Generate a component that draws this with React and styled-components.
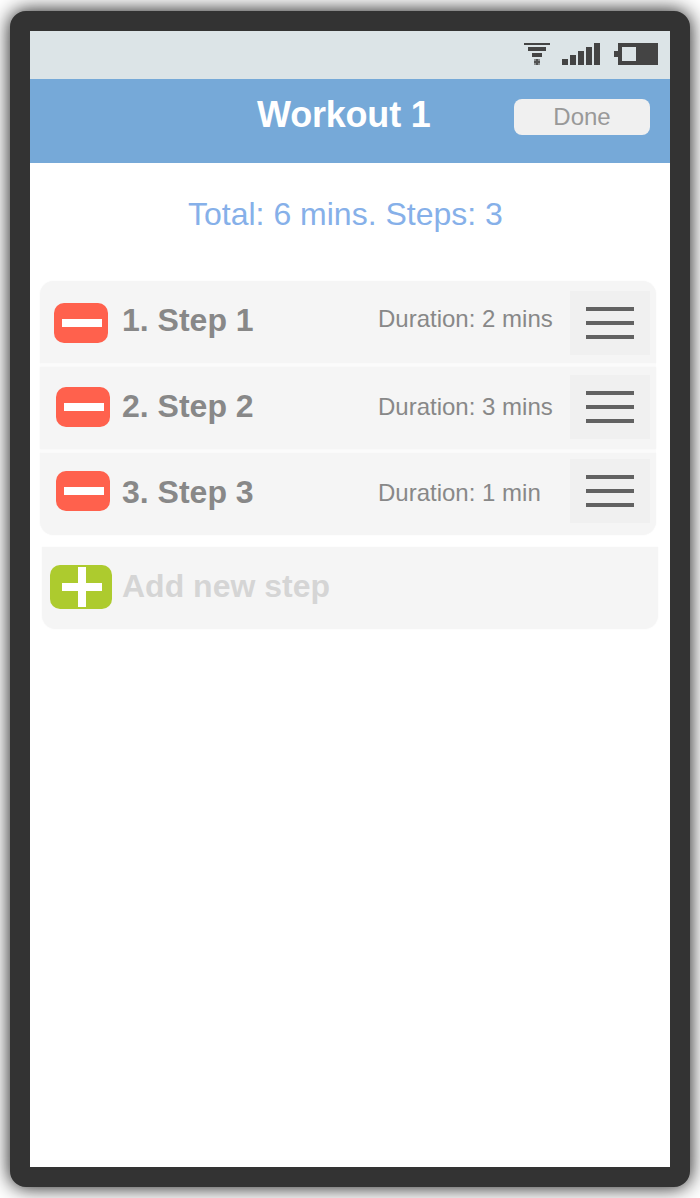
import React from "react";
import styled, { createGlobalStyle } from "styled-components";

const GlobalStyle = createGlobalStyle`
  * { box-sizing: border-box; }
  body {
    margin: 0;
    background: #fff;
    font-family: "Liberation Sans", Arial, sans-serif;
    overflow: hidden;
  }
  button { border: 0; padding: 0; margin: 0; font: inherit; }
`;

const Page = styled.div`
  width: 700px;
  height: 1198px;
  padding: 11px 10px;
  overflow: hidden;
`;

const Phone = styled.main`
  width: 680px;
  height: 1176px;
  border: 20px solid #333;
  border-radius: 16px;
  background: #fff;
  box-shadow: 0 0 20px rgba(0, 0, 0, 0.95);
  display: flex;
  flex-direction: column;
`;

const StatusBar = styled.div`
  height: 48px;
  padding: 12px 12px 0 0;
  background: #dce4e7;
  display: flex;
  justify-content: flex-end;
  align-items: flex-start;
  svg { display: block; fill: #444; }
`;

const WifiIcon = styled.svg`margin-right: 12px;`;
const SignalIcon = styled.svg`margin-right: 14px;`;

const Header = styled.header`
  height: 84px;
  background: #76a9d8;
  display: grid;
  grid-template-columns: 227px 257px 136px;
  align-items: start;
`;

const Title = styled.h1`
  margin: 15px 0 0;
  font-size: 36px;
  line-height: 41px;
  font-weight: bold;
  letter-spacing: -0.2px;
  color: #fff;
  white-space: nowrap;
`;

const DoneButton = styled.button`
  margin-top: 20px;
  height: 36px;
  border-radius: 8px;
  background: #f0f0f0;
  color: #999;
  font-size: 24px;
  line-height: 36px;
`;

const Summary = styled.p`
  margin: 33px 0 0 158px;
  font-size: 32px;
  line-height: 36px;
  color: #86b0e9;
  white-space: nowrap;
`;

const StepList = styled.ul`
  list-style: none;
  margin: 49px 14px 0 10px;
  padding: 0;
  display: flex;
  flex-direction: column;
  gap: 4px;
  background: #fbfbfb;
  border-radius: 14px;
`;

const Row = styled.li`
  height: 82px;
  background: #f5f5f5;
  box-shadow: 0 0 2px #f5f5f5;
  display: grid;
  grid-template-columns: 82px 256px 192px 80px;
  align-items: start;
  &:first-child { border-radius: 14px 14px 0 0; }
  &:last-child { border-radius: 0 0 14px 14px; }
`;

const AddRow = styled.div`
  height: 82px;
  margin: 12px 12px 0;
  background: #f5f5f5;
  box-shadow: 0 0 2px #f5f5f5;
  border-radius: 0 0 14px 14px;
  display: grid;
  grid-template-columns: 80px 1fr;
  align-items: start;
`;

const RemoveButton = styled.button`
  width: 54px;
  height: 40px;
  margin: ${(p) => p.$top}px 0 0 ${(p) => p.$left}px;
  border-radius: 10px;
  background: #ff614d;
  svg { display: block; margin: 16px 0 0 8px; }
  display: flex;
  align-items: flex-start;
`;

const AddButton = styled.button`
  width: 62px;
  height: 44px;
  margin: 18px 0 0 8px;
  border-radius: 10px;
  background: #adcb2e;
  display: flex;
  align-items: flex-start;
  svg { display: block; margin: 2px 0 0 12px; }
`;

const StepName = styled.span`
  margin-top: ${(p) => p.$top}px;
  font-size: 32px;
  line-height: 36px;
  font-weight: bold;
  color: ${(p) => (p.$muted ? "#d5d5d5" : "#888")};
  white-space: nowrap;
`;

const Duration = styled.span`
  margin-top: ${(p) => p.$top}px;
  font-size: 24px;
  line-height: 27px;
  color: #888;
  white-space: nowrap;
`;

const DragHandle = styled.button`
  width: 80px;
  height: 64px;
  margin-top: ${(p) => p.$top}px;
  background: #f0f0f0;
  display: flex;
  flex-direction: column;
  align-items: center;
  justify-content: center;
  gap: 10px;
`;

const HandleLine = styled.span`
  width: 48px;
  height: 4px;
  background: #626262;
`;

const steps = [
  { name: "Step 1", time: "2 mins", left: 14, remove: 22, label: 21, duration: 24, handle: 10 },
  { name: "Step 2", time: "3 mins", left: 16, remove: 20, label: 21, duration: 26, handle: 8 },
  { name: "Step 3", time: "1 min", left: 16, remove: 18, label: 21, duration: 26, handle: 6 },
];

export default function App() {
  return (
    <Page>
      <GlobalStyle />
      <Phone>
        <StatusBar>
          <WifiIcon width="26" height="22" shapeRendering="crispEdges">
            <path d="M0 0h26v2H0zM4 4h18v4H4zM8 10h10v4H8z" />
            <path d="M10 16h6v6h-6z" opacity="0.55" />
            <path d="M12 16h2v2h2v2h-2v2h-2v-2h-2v-2h2z" opacity="0.8" />
          </WifiIcon>
          <SignalIcon width="38" height="22" shapeRendering="crispEdges">
            <path d="M0 16h6v6H0zM8 12h6v10H8zM16 8h6v14h-6zM24 4h6v18h-6zM32 0h6v22h-6z" />
          </SignalIcon>
          <svg width="44" height="22" shapeRendering="crispEdges">
            <path fillRule="evenodd" d="M4 0h40v22H4v-8H0V8h4zM8 4v14h14V4z" />
          </svg>
        </StatusBar>
        <Header>
          <span />
          <Title>Workout 1</Title>
          <DoneButton>Done</DoneButton>
        </Header>
        <Summary>Total: 6 mins. Steps: 3</Summary>
        <StepList>
          {steps.map((s, i) => (
            <Row key={s.name}>
              <RemoveButton $top={s.remove} $left={s.left} aria-label="Remove">
                <svg width="40" height="8"><path fill="#fff" d="M0 0h40v8H0z" /></svg>
              </RemoveButton>
              <StepName $top={s.label}>{`${i + 1}. ${s.name}`}</StepName>
              <Duration $top={s.duration}>Duration: {s.time}</Duration>
              <DragHandle $top={s.handle} aria-label="Reorder">
                <HandleLine />
                <HandleLine />
                <HandleLine />
              </DragHandle>
            </Row>
          ))}
        </StepList>
        <AddRow>
          <AddButton aria-label="Add">
            <svg width="40" height="40"><path fill="#fff" d="M16 0h8v16h16v8H24v16h-8V24H0v-8h16z" /></svg>
          </AddButton>
          <StepName $top={21} $muted>Add new step</StepName>
        </AddRow>
      </Phone>
    </Page>
  );
}
